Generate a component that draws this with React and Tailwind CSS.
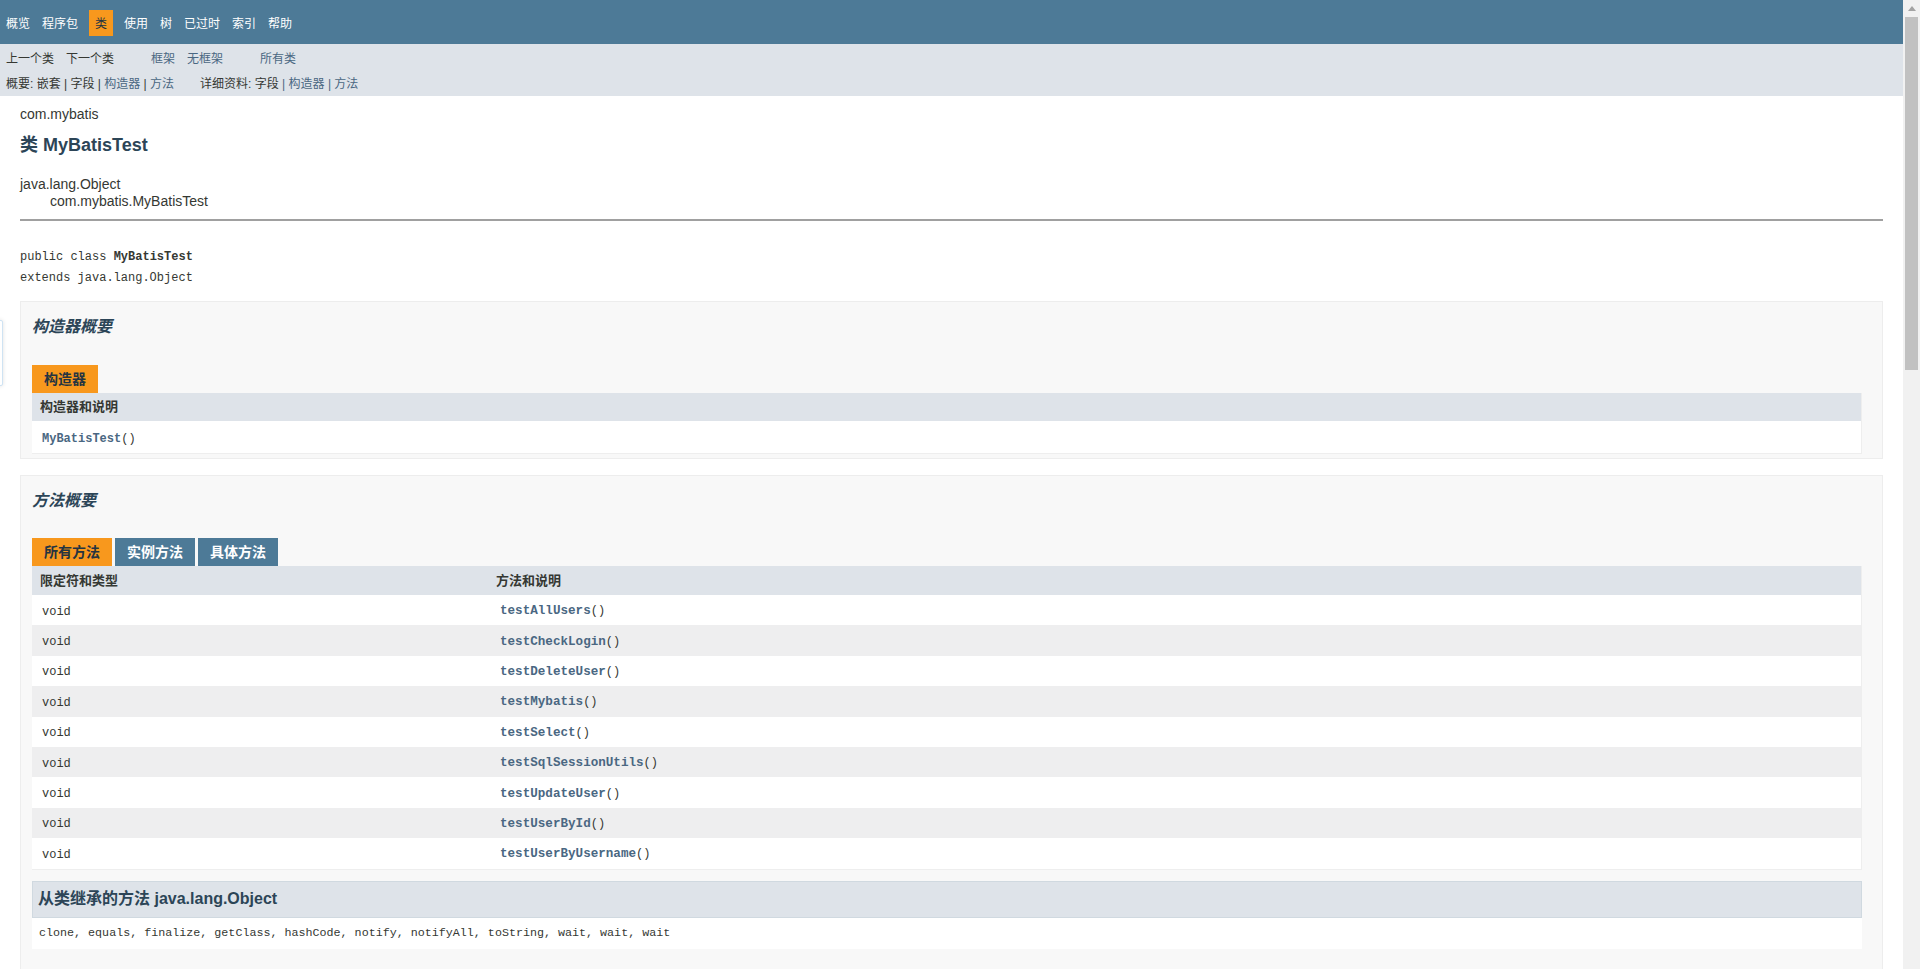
// Javadoc 类页面：com.mybatis.MyBatisTest
const SANS = "font-['Liberation_Sans','Noto_Sans_CJK_SC',sans-serif]";
const MONO = "font-['Liberation_Mono','Noto_Sans_CJK_SC',monospace]";

const NAV = ["概览", "程序包", "类", "使用", "树", "已过时", "索引", "帮助"];

const METHODS = [
  "testAllUsers",
  "testCheckLogin",
  "testDeleteUser",
  "testMybatis",
  "testSelect",
  "testSqlSessionUtils",
  "testUpdateUser",
  "testUserById",
  "testUserByUsername",
];

function TopNav() {
  return (
    <div className="h-[44px] bg-[#4d7a97] pt-[10px]">
      <ul className="flex text-[12px] leading-[16px]">
        {NAV.map((n) =>
          n === "类" ? (
            <li
              key={n}
              className="mx-[5px] bg-[#f8981d] px-[6px] pb-[4px] pt-[6px] text-[#253441]"
            >
              {n}
            </li>
          ) : (
            <li key={n} className="px-[6px] pb-[4px] pt-[6px] text-white">
              {n}
            </li>
          )
        )}
      </ul>
    </div>
  );
}

function SubNav() {
  const link = "text-[#4a6782]";
  return (
    <div className="h-[52px] bg-[#dee3e9] text-[12px] text-[#353833]">
      <div className="flex h-[28px] items-center pl-[6px] pt-[1px]">
        <span>上一个类</span>
        <span className="ml-[12px]">下一个类</span>
        <span className={`ml-[37px] ${link}`}>框架</span>
        <span className={`ml-[12px] ${link}`}>无框架</span>
        <span className={`ml-[37px] ${link}`}>所有类</span>
      </div>
      <div className="flex h-[24px] items-center pl-[6px]">
        <span>
          概要:&nbsp;嵌套 | 字段 | <span className={link}>构造器</span> |{" "}
          <span className={link}>方法</span>
        </span>
        <span className="ml-[26px]">
          详细资料:&nbsp;字段 <span className={link}>| 构造器 | 方法</span>
        </span>
      </div>
    </div>
  );
}

function Tab({ children, active }) {
  return (
    <div
      className={
        "flex h-[28px] items-center px-[12px] text-[14px] font-bold " +
        (active ? "bg-[#f8981d] text-[#253441]" : "bg-[#4d7a97] text-white")
      }
    >
      {children}
    </div>
  );
}

function SectionTitle({ children }) {
  return (
    <h3 className="text-[16px] font-bold italic leading-[20px] text-[#2c4557]">
      {children}
    </h3>
  );
}

function ConstructorSummary() {
  return (
    <div className="mt-[12px] border border-[#ededed] bg-[#f8f8f8] pb-[4px] pl-[11px] pr-[20px] pt-[15px]">
      <SectionTitle>构造器概要</SectionTitle>
      <div className="mt-[28px] flex">
        <Tab active>构造器</Tab>
      </div>
      <div className="border-b border-r border-[#eeeeee]">
        <div className="flex h-[28px] items-center bg-[#dee3e9] pl-[8px] text-[13px] font-bold text-[#353833]">
          构造器和说明
        </div>
        <div
          className={`flex h-[32px] items-center bg-white pl-[10px] pt-[3px] text-[12px] ${MONO}`}
        >
          <span className="font-bold text-[#4a6782]">MyBatisTest</span>
          <span>()</span>
        </div>
      </div>
    </div>
  );
}

function MethodSummary() {
  return (
    <div className="mt-[16px] border border-[#ededed] bg-[#f8f8f8] pb-[20px] pl-[11px] pr-[20px] pt-[15px]">
      <SectionTitle>方法概要</SectionTitle>
      <div className="mt-[27px] flex gap-[3px]">
        <Tab active>所有方法</Tab>
        <Tab>实例方法</Tab>
        <Tab>具体方法</Tab>
      </div>
      <div className="border-b border-r border-[#eeeeee]">
        <div className="flex h-[29px] items-center bg-[#dee3e9] pt-[1px] text-[13px] font-bold text-[#353833]">
          <div className="w-[456px] pl-[8px]">限定符和类型</div>
          <div className="pl-[8px]">方法和说明</div>
        </div>
        {METHODS.map((m, i) => (
          <div
            key={m}
            className={
              `flex h-[30.4px] items-center pt-[3px] text-[12px] ${MONO} ` +
              (i % 2 === 0 ? "bg-white" : "bg-[#eeeeef]")
            }
          >
            <div className="w-[456px] pl-[10px]">void</div>
            <div className="pl-[12px]">
              <span className="text-[12.6px] font-bold text-[#4a6782]">{m}</span>()
            </div>
          </div>
        ))}
      </div>
      <div className="mt-[11px] flex h-[37px] items-center border border-[#d0d9e0] bg-[#dee3e9] pl-[5px] text-[16px] font-bold text-[#2c4557]">
        从类继承的方法&nbsp;java.lang.Object
      </div>
      <div
        className={`flex h-[31px] items-center bg-white pl-[7px] pt-[2px] text-[11.7px] ${MONO}`}
      >
        clone, equals, finalize, getClass, hashCode, notify, notifyAll,
        toString, wait, wait, wait
      </div>
    </div>
  );
}

function Scrollbar() {
  return (
    <div className="flex w-[17px] flex-col items-center bg-[#f1f1f1]">
      <div className="flex h-[17px] items-center justify-center">
        <svg width="8" height="5" viewBox="0 0 8 5">
          <path d="M0 5 L4 0 L8 5 Z" fill="#a3a3a3" />
        </svg>
      </div>
      <div className="h-[353px] w-[13px] bg-[#c1c1c1]" />
    </div>
  );
}

export default function App() {
  return (
    <div
      className={`relative flex h-[969px] overflow-hidden bg-white text-[#353833] ${SANS}`}
    >
      <div className="flex-1 overflow-hidden">
        <TopNav />
        <SubNav />
        <div className="px-[20px]">
          <div className="pt-[10px] text-[14px] leading-[16px]">com.mybatis</div>
          <h2 className="mt-[12px] text-[18px] font-bold leading-[22px] text-[#2c4557]">
            类 MyBatisTest
          </h2>
          <div className="mt-[20px] text-[14px] leading-[16px]">java.lang.Object</div>
          <div className="mt-px pl-[30px] text-[14px] leading-[16px]">
            com.mybatis.MyBatisTest
          </div>
          <div className="mt-[10px] h-[2px] bg-[#a0a0a0]" />
          <div className={`mt-[26px] text-[12px] leading-[21px] ${MONO}`}>
            <div>
              public class <span className="font-bold">MyBatisTest</span>
            </div>
            <div>extends java.lang.Object</div>
          </div>
          <ConstructorSummary />
          <MethodSummary />
        </div>
      </div>
      <Scrollbar />
      {/* 左侧贴边的小浮层 */}
      <div className="absolute left-[-6px] top-[320px] h-[66px] w-[9px] rounded-[2px] border border-[#cfe3f3] bg-white shadow-[0_0_4px_rgba(0,0,0,0.12)]" />
    </div>
  );
}
